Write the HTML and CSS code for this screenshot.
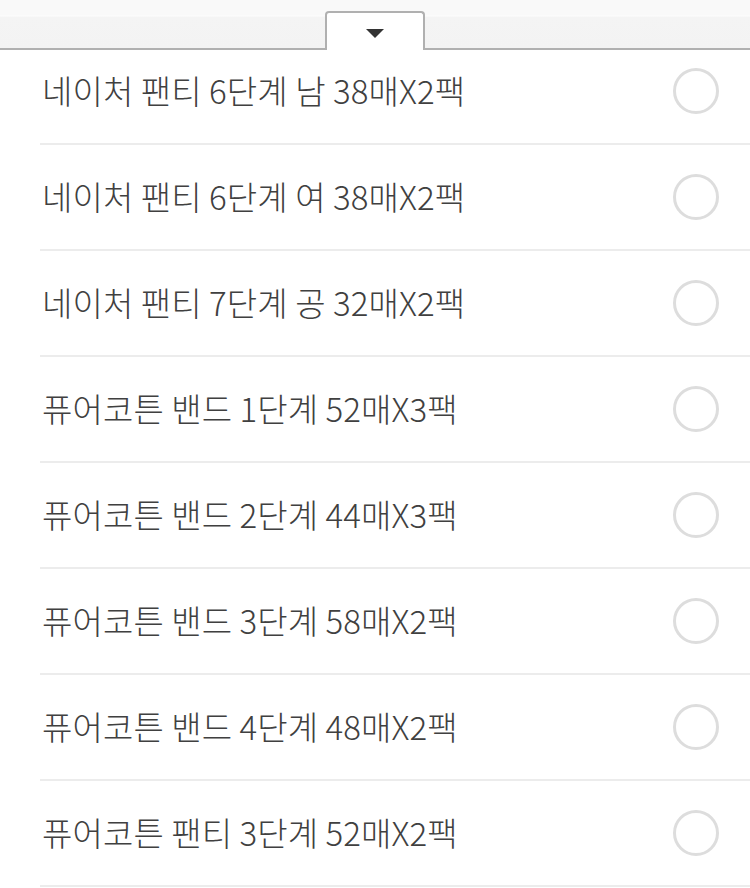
FILE: index.html
```html
<!DOCTYPE html>
<html>
  <head>
    <title>상품 선택</title>
    <link rel="stylesheet" href="styles.css">
  </head>
  <body>
    <div class="topbar">
      <button class="toggle" title="접기">
        <span class="arrow"></span>
      </button>
    </div>

    <ul class="option-list">
      <li class="option"><span class="label">네이처 팬티 6단계 남 38매X2팩</span><span class="radio"></span></li>
      <li class="option"><span class="label">네이처 팬티 6단계 여 38매X2팩</span><span class="radio"></span></li>
      <li class="option"><span class="label">네이처 팬티 7단계 공 32매X2팩</span><span class="radio"></span></li>
      <li class="option"><span class="label">퓨어코튼 밴드 1단계 52매X3팩</span><span class="radio"></span></li>
      <li class="option"><span class="label">퓨어코튼 밴드 2단계 44매X3팩</span><span class="radio"></span></li>
      <li class="option"><span class="label">퓨어코튼 밴드 3단계 58매X2팩</span><span class="radio"></span></li>
      <li class="option"><span class="label">퓨어코튼 밴드 4단계 48매X2팩</span><span class="radio"></span></li>
      <li class="option"><span class="label">퓨어코튼 팬티 3단계 52매X2팩</span><span class="radio"></span></li>
    </ul>
  </body>
</html>
```

FILE: styles.css
```css
body {
  margin: 0;
  background-color: #ffffff;
  font-family: "Noto Sans CJK KR", "Noto Sans", sans-serif;
  overflow: hidden;
}

/* Top bar with the collapse tab */
.topbar {
  position: relative;
  z-index: 1;
  height: 48px;
  background: linear-gradient(#f9f9f9 0, #f9f9f9 15px, #fdfdfd 16px, #f4f4f4 17px, #f3f3f3 100%);
  border-bottom: 2px solid #b0b0b0;
  display: flex;
  justify-content: center;
  align-items: flex-end;
}

.toggle {
  width: 100px;
  height: 39px;
  margin: 0 0 -2px 0;
  padding: 16px 0 0;
  background-color: #ffffff;
  border: 2px solid #b0b0b0;
  border-bottom: none;
  border-radius: 4px 4px 0 0;
  display: flex;
  justify-content: center;
  box-sizing: border-box;
}

.arrow {
  width: 0;
  height: 0;
  border-left: 9px solid transparent;
  border-right: 9px solid transparent;
  border-top: 9px solid #333333;
}

/* Option rows */
.option-list {
  list-style: none;
  margin: -11px 0 0 0;
  padding: 0 0 0 40px;
}

.option {
  height: 104px;
  display: flex;
  align-items: center;
  justify-content: space-between;
  border-bottom: 2px solid #ececec;
  padding-right: 31px;
}

.label {
  padding-left: 2px;
  margin-top: -3px;
  font-size: 33px;
  font-weight: 300;
  color: #404040;
  letter-spacing: 0.1px;
}

.radio {
  width: 40px;
  height: 40px;
  border: 3px solid #dddddd;
  border-radius: 50%;
}
```
